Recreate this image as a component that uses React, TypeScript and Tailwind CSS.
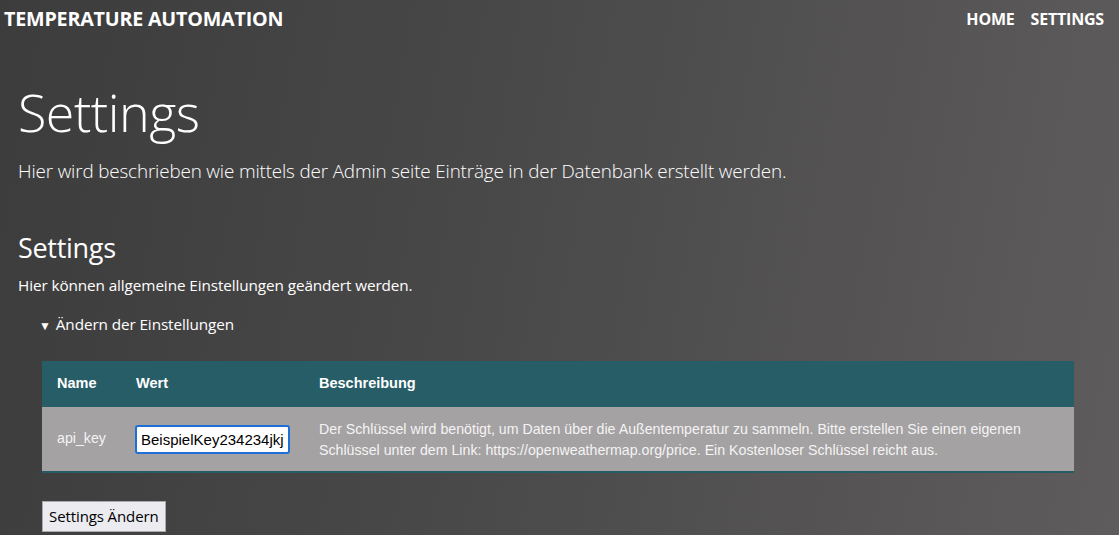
import { useState } from 'react';

const SettingsPage = () => {
  const [apiKey, setApiKey] = useState('BeispielKey234234jkj');

  return (
    <div className="min-h-screen w-full bg-[linear-gradient(100deg,#3d3c3d_0%,#4a494a_45%,#5e5c5d_100%)] text-white font-['Open_Sans','Noto_Sans',sans-serif]">
      {/* Navbar */}
      <nav className="flex items-center justify-between h-[38px] pl-[4px] pr-[15px]">
        <span className="text-[19.7px] font-bold tracking-[-0.2px]">TEMPERATURE AUTOMATION</span>
        <div className="flex gap-[16px] text-[16px] font-bold tracking-[-0.2px]">
          <a href="#">HOME</a>
          <a href="#">SETTINGS</a>
        </div>
      </nav>

      <main className="px-[18px]">
        <h1 className="mt-[42px] text-[52px] font-light leading-[64px] tracking-[-0.5px]">Settings</h1>
        <p className="mt-[14px] text-[18.85px] font-light leading-[26px] tracking-[-0.15px]">
          Hier wird beschrieben wie mittels der Admin seite Einträge in der Datenbank erstellt werden.
        </p>

        <h2 className="mt-[47px] text-[27px] leading-[34px] tracking-[-0.3px]">Settings</h2>
        <p className="mt-[9px] text-[15.3px] leading-[22px] tracking-[-0.1px]">
          Hier können allgemeine Einstellungen geändert werden.
        </p>

        <details open className="mt-[17px]">
          <summary className="pl-[21px] text-[15.3px] leading-[22px] list-none cursor-pointer tracking-[-0.1px]">
            <span className="mr-[5px] text-[12px]">▼</span>Ändern der Einstellungen
          </summary>

          <div className="ml-[24px] mr-[27px] mt-[24px]">
            <table className="w-full border-collapse font-['Liberation_Sans',Arial,sans-serif] text-[14.2px]">
              <thead>
                <tr className="bg-[#265d67] h-[46px] text-left text-[14.5px]">
                  <th className="pl-[15px] w-[79px] font-bold">Name</th>
                  <th className="pl-[15px] w-[183px] font-bold">Wert</th>
                  <th className="pl-[15px] font-bold">Beschreibung</th>
                </tr>
              </thead>
              <tbody>
                <tr className="bg-[#a4a2a3] border-b-[2px] border-[#265d67]">
                  <td className="pl-[15px] text-[#f4f4f4]">api_key</td>
                  <td className="pl-[14px]">
                    <input
                      value={apiKey}
                      onChange={(e) => setApiKey(e.target.value)}
                      className="w-[155px] h-[29px] px-[4px] bg-white text-black text-[15px] border-[2px] border-[#1f6fd6] rounded-[3px] outline-none"
                    />
                  </td>
                  <td className="pl-[15px] pr-[15px] pt-[12px] pb-[10px] leading-[21px] text-[#f4f4f4]">
                    Der Schlüssel wird benötigt, um Daten über die Außentemperatur zu sammeln. Bitte erstellen Sie einen eigenen
                    Schlüssel unter dem Link: https://openweathermap.org/price. Ein Kostenloser Schlüssel reicht aus.
                  </td>
                </tr>
              </tbody>
            </table>
          </div>
        </details>

        <button className="ml-[24px] mt-[28px] h-[31px] px-[6px] bg-[#ebebf0] text-black text-[15px] border border-[#aaa] tracking-[-0.1px]">
          Settings Ändern
        </button>
      </main>
    </div>
  );
};

export default function App() {
  return <SettingsPage />;
}
